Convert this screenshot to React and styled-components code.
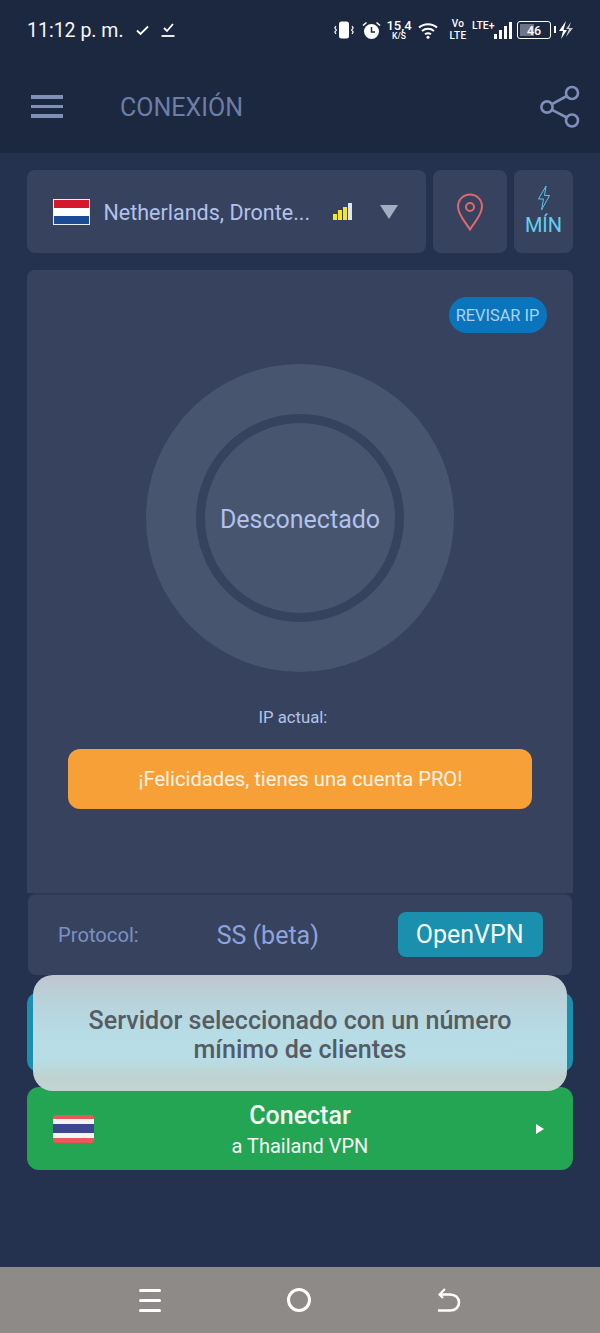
import styled, { createGlobalStyle } from "styled-components";

const GlobalStyle = createGlobalStyle`
  html, body {
    margin: 0;
    padding: 0;
    background: #25324f;
  }
  * {
    box-sizing: border-box;
  }
`;

const App = () => {
  return (
    <Page>
      <GlobalStyle />
      <Top>
        <StatusBar>
          <Clock>11:12 p. m.</Clock>
          <StatusLeftIcons>
            <svg width="15" height="12" viewBox="0 0 15 12" fill="none" stroke="#fff" strokeWidth="1.8">
              <path d="M2 6.5 L5.5 10 L13 2.5" />
            </svg>
            <svg width="14" height="16" viewBox="0 0 14 16" fill="none" stroke="#fff" strokeWidth="1.8">
              <path d="M3 6 L6 9 L12 2" />
              <path d="M0.5 14 H13.5" />
            </svg>
          </StatusLeftIcons>
          <StatusRight>
            <svg width="20" height="18" viewBox="0 0 20 18" fill="#fff">
              <rect x="5" y="0.5" width="10" height="17" rx="2.5" />
              <path d="M2 5 L0.8 7 L2.4 9 L0.8 11 L2 13" fill="none" stroke="#fff" strokeWidth="1.2" />
              <path d="M18 5 L19.2 7 L17.6 9 L19.2 11 L18 13" fill="none" stroke="#fff" strokeWidth="1.2" />
            </svg>
            <AlarmIcon width="19" height="19" viewBox="0 0 19 19">
              <circle cx="9.5" cy="10.5" r="7.5" fill="#fff" />
              <path d="M9.5 6 V11 H13" fill="none" stroke="#1c2840" strokeWidth="1.5" />
              <path d="M1 4.5 L4.5 1.5 M18 4.5 L14.5 1.5" stroke="#fff" strokeWidth="1.6" />
            </AlarmIcon>
            <Speed>
              <SpeedValue>15,4</SpeedValue>
              <SpeedUnit>K/S</SpeedUnit>
            </Speed>
            <WifiIcon width="20" height="17" viewBox="0 0 20 17" fill="none" stroke="#fff" strokeWidth="2">
              <path d="M1 5.5 C6 1 14 1 19 5.5" />
              <path d="M4 9 C7.5 6 12.5 6 16 9" />
              <path d="M7 12.3 C9 10.8 11 10.8 13 12.3" />
              <circle cx="10" cy="15.3" r="1.5" fill="#fff" stroke="none" />
            </WifiIcon>
            <VoLte>
              <span>Vo</span>
              <span>LTE</span>
            </VoLte>
            <LtePlus>LTE+</LtePlus>
            <SignalBars>
              <SignalBar $h={5} />
              <SignalBar $h={9} />
              <SignalBar $h={13} />
              <SignalBar $h={17} />
            </SignalBars>
            <Battery>
              <BatteryFill />
              <BatteryLevel>46</BatteryLevel>
              <BatteryCap />
            </Battery>
            <BoltIcon width="15" height="18" viewBox="0 0 15 18" fill="#fff">
              <path d="M8 0 L1 10 H5 L3 18 L9 9 H5.5 Z" />
              <path d="M13 1 L8 8 H11 L8 16 L15 7 H11 Z" opacity="0.75" />
            </BoltIcon>
          </StatusRight>
        </StatusBar>
        <Toolbar>
          <MenuButton>
            <MenuLine />
            <MenuLine />
            <MenuLine />
          </MenuButton>
          <Title>CONEXIÓN</Title>
          <svg width="40" height="44" viewBox="0 0 40 44" fill="none" stroke="#7f8fb8" strokeWidth="2.6">
            <circle cx="7" cy="22" r="5.6" />
            <circle cx="32" cy="8" r="6" />
            <circle cx="32" cy="35.5" r="6" />
            <path d="M12 19.2 L26.8 11 M12 24.8 L26.8 32.5" />
          </svg>
        </Toolbar>
      </Top>

      <Content>
        <ServerRow>
          <ServerSelect>
            <FlagNl>
              <FlagStripe $color="#d5182c" />
              <FlagStripe $color="#ffffff" />
              <FlagStripe $color="#1c4a94" />
            </FlagNl>
            <ServerName>Netherlands, Dronte...</ServerName>
            <Strength>
              <StrengthBar $h={6} $color="#f6e52a" />
              <StrengthBar $h={10} $color="#f6e52a" />
              <StrengthBar $h={13} $color="#f6e52a" />
              <StrengthBar $h={17} $color="#dfe6ee" />
            </Strength>
            <Caret />
          </ServerSelect>
          <PinButton>
            <svg width="28" height="38" viewBox="0 0 28 38" fill="none" stroke="#e0686c" strokeWidth="2">
              <path d="M14 36.5 C10 30 2 22 2 13.5 C2 6.5 7.5 1.5 14 1.5 C20.5 1.5 26 6.5 26 13.5 C26 22 18 30 14 36.5 Z" />
              <circle cx="14" cy="14" r="4" />
            </svg>
          </PinButton>
          <MinButton>
            <svg width="14" height="26" viewBox="0 0 14 26" fill="none" stroke="#55c6e6" strokeWidth="1">
              <path d="M9 1 L1.5 14 H6.5 L4.5 25 L12.5 10.5 H7.5 Z" />
            </svg>
            <MinLabel>MÍN</MinLabel>
          </MinButton>
        </ServerRow>

        <Panel>
          <CheckIpRow>
            <CheckIp>REVISAR IP</CheckIp>
          </CheckIpRow>
          <OuterCircle>
            <InnerCircle>Desconectado</InnerCircle>
          </OuterCircle>
          <CurrentIp>IP actual:</CurrentIp>
          <ProBanner>¡Felicidades, tienes una cuenta PRO!</ProBanner>
        </Panel>

        <ProtocolRow>
          <ProtocolLabel>Protocol:</ProtocolLabel>
          <ProtocolOption>SS (beta)</ProtocolOption>
          <ProtocolActive>OpenVPN</ProtocolActive>
        </ProtocolRow>

        <Actions>
          <TealButton />
          <ConnectButton>
            <FlagTh>
              <FlagStripe $color="#e8585c" $grow={1} />
              <FlagStripe $color="#f4f4f4" $grow={1} />
              <FlagStripe $color="#3d4790" $grow={2} />
              <FlagStripe $color="#f4f4f4" $grow={1} />
              <FlagStripe $color="#e8585c" $grow={1} />
            </FlagTh>
            <ConnectText>
              <ConnectTitle>Conectar</ConnectTitle>
              <ConnectSub>a Thailand VPN</ConnectSub>
            </ConnectText>
            <Arrow />
          </ConnectButton>
          <Toast>Servidor seleccionado con un número mínimo de clientes</Toast>
        </Actions>
      </Content>

      <NavBar>
        <NavMenu>
          <NavLine />
          <NavLine />
          <NavLine />
        </NavMenu>
        <NavHome />
        <svg width="24" height="26" viewBox="0 0 24 26" fill="none" stroke="#fff" strokeWidth="2.6">
          <path d="M1 23.5 H13 C18.5 23.5 22 20 22 15.5 C22 11 18.5 7.5 13 7.5 H3" />
          <path d="M8 2 L2.5 7.5 L6 11" strokeWidth="2.2" />
        </svg>
      </NavBar>
    </Page>
  );
};

export default App;

const Page = styled.div`
  position: relative;
  width: 600px;
  height: 1333px;
  overflow: hidden;
  display: flex;
  flex-direction: column;
  background: #25324f;
  font-family: Roboto, "Liberation Sans", sans-serif;
`;
const Top = styled.header`
  height: 153px;
  background: #1c2840;
`;
const StatusBar = styled.div`
  height: 60px;
  padding: 0 27px;
  display: flex;
  align-items: center;
`;
const Clock = styled.div`
  color: #f4f6f8;
  font-size: 19.5px;
`;
const StatusLeftIcons = styled.div`
  display: flex;
  align-items: center;
  gap: 11px;
  margin-left: 11px;
`;
const StatusRight = styled.div`
  display: flex;
  align-items: center;
  margin-left: auto;
  color: #fff;
`;
const AlarmIcon = styled.svg`
  margin-left: 8px;
`;
const Speed = styled.div`
  width: 24px;
  margin-left: 6px;
  display: flex;
  flex-direction: column;
  align-items: center;
  line-height: 1;
  font-weight: 500;
`;
const SpeedValue = styled.span`
  font-size: 13px;
`;
const SpeedUnit = styled.span`
  font-size: 8.5px;
`;
const WifiIcon = styled.svg`
  margin-left: 7px;
`;
const VoLte = styled.div`
  width: 18px;
  display: flex;
  flex-direction: column;
  align-items: center;
  margin-left: 11px;
  font-size: 10px;
  line-height: 12px;
  letter-spacing: 0.4px;
  font-weight: 500;
`;
const LtePlus = styled.span`
  width: 24px;
  margin: 0 -2px 8px 5px;
  font-size: 10.5px;
  line-height: 10px;
  font-weight: 500;
  white-space: nowrap;
`;
const SignalBars = styled.div`
  display: flex;
  align-items: flex-end;
  gap: 2px;
  height: 17px;
`;
const SignalBar = styled.i`
  display: block;
  width: 3px;
  height: ${(p) => p.$h}px;
  background: #fff;
`;
const Battery = styled.div`
  position: relative;
  width: 34px;
  height: 18px;
  margin-left: 5px;
  border: 1.5px solid #fff;
  border-radius: 3px;
  display: flex;
  align-items: center;
  justify-content: center;
`;
const BatteryFill = styled.div`
  position: absolute;
  left: 2px;
  top: 2px;
  bottom: 2px;
  width: 14px;
  background: #6d7586;
`;
const BatteryLevel = styled.span`
  position: relative;
  font-size: 12.5px;
  font-weight: 500;
`;
const BatteryCap = styled.div`
  position: absolute;
  right: -6px;
  top: 4px;
  width: 2px;
  height: 7px;
  background: #fff;
`;
const BoltIcon = styled.svg`
  margin-left: 7px;
`;
const Toolbar = styled.div`
  height: 93px;
  padding: 0 20px 0 31px;
  display: flex;
  align-items: center;
`;
const MenuButton = styled.div`
  width: 32px;
  display: flex;
  flex-direction: column;
  gap: 6px;
`;
const MenuLine = styled.div`
  height: 3.5px;
  background: #7f8fb8;
`;
const Title = styled.div`
  margin-left: 57px;
  margin-top: 2px;
  color: #6c7ea5;
  font-size: 25px;
  flex: 1;
`;
const Content = styled.main`
  flex: 1;
  padding: 17px 27px 0;
  display: flex;
  flex-direction: column;
`;
const ServerRow = styled.div`
  height: 83px;
  display: flex;
  gap: 7px;
`;
const Card = styled.div`
  background: #37435e;
  border-radius: 8px;
`;
const ServerSelect = styled(Card)`
  width: 399px;
  padding-left: 26px;
  display: flex;
  align-items: center;
`;
const FlagNl = styled.div`
  width: 37px;
  height: 26px;
  display: flex;
  flex-direction: column;
  border: 1px solid #e8eef4;
`;
const FlagStripe = styled.div`
  flex: ${(p) => p.$grow || 1};
  background: ${(p) => p.$color};
`;
const ServerName = styled.div`
  margin: 2px 1px 0 13.5px;
  width: 228.5px;
  color: #b1c2ea;
  font-size: 21.5px;
  white-space: nowrap;
`;
const Strength = styled.div`
  display: flex;
  align-items: flex-end;
  gap: 1px;
  height: 17px;
`;
const StrengthBar = styled.i`
  display: block;
  width: 4px;
  height: ${(p) => p.$h}px;
  background: ${(p) => p.$color};
`;
const Caret = styled.div`
  margin-left: 28px;
  width: 0;
  height: 0;
  border-left: 9px solid transparent;
  border-right: 9px solid transparent;
  border-top: 14px solid #a2adc2;
`;
const PinButton = styled(Card)`
  width: 74px;
  display: flex;
  align-items: center;
  justify-content: center;
`;
const MinButton = styled(Card)`
  flex: 1;
  display: flex;
  flex-direction: column;
  align-items: center;
  padding-top: 15px;
`;
const MinLabel = styled.div`
  color: #5fd0ee;
  font-size: 20px;
  line-height: 24px;
  margin-top: 2px;
`;
const Panel = styled(Card)`
  margin-top: 17px;
  height: 623px;
  padding-top: 27px;
  border-radius: 8px 8px 0 0;
  display: flex;
  flex-direction: column;
  align-items: center;
`;
const CheckIpRow = styled.div`
  align-self: stretch;
  display: flex;
  justify-content: flex-end;
  padding-right: 26px;
`;
const CheckIp = styled.div`
  height: 36px;
  width: 98px;
  padding-right: 1px;
  border-radius: 18px;
  background: #0a75bd;
  color: #a9d2ee;
  font-size: 16.4px;
  display: flex;
  align-items: center;
  justify-content: center;
`;
const OuterCircle = styled.div`
  margin-top: 31px;
  width: 308px;
  height: 308px;
  border-radius: 50%;
  background: #47556f;
  display: flex;
  align-items: center;
  justify-content: center;
`;
const InnerCircle = styled.div`
  width: 208px;
  height: 208px;
  padding-top: 2px;
  border-radius: 50%;
  border: 9px solid #37435e;
  display: flex;
  align-items: center;
  justify-content: center;
  color: #b1c2ea;
  font-size: 25px;
  white-space: nowrap;
`;
const CurrentIp = styled.div`
  margin-top: 36px;
  margin-right: 14px;
  color: #b1c2ea;
  font-size: 16.7px;
  line-height: 20px;
`;
const ProBanner = styled.div`
  margin-top: 21px;
  width: 464px;
  height: 60px;
  padding-left: 1px;
  border-radius: 12px;
  background: #f7a037;
  color: #fdf3e4;
  font-size: 20.2px;
  display: flex;
  align-items: center;
  justify-content: center;
`;
const ProtocolRow = styled(Card)`
  margin: 0 1px;
  height: 82px;
  padding: 0 29px 0 30px;
  border-top: 2px solid #2d3955;
  display: flex;
  align-items: center;
`;
const ProtocolLabel = styled.div`
  width: 159px;
  color: #7d8fc6;
  font-size: 20.2px;
`;
const ProtocolOption = styled.div`
  width: 182px;
  color: #8da3dc;
  font-size: 25px;
`;
const ProtocolActive = styled.div`
  width: 145px;
  height: 45px;
  margin-top: -1px;
  padding-right: 2px;
  border-radius: 8px;
  background: #1a8fae;
  color: #f2f8fb;
  font-size: 25px;
  display: flex;
  align-items: center;
  justify-content: center;
`;
const Actions = styled.div`
  position: relative;
  margin-top: 17px;
  display: flex;
  flex-direction: column;
  gap: 15px;
`;
const TealButton = styled.div`
  height: 80px;
  border-radius: 12px;
  background: #1a8fae;
`;
const ConnectButton = styled.div`
  height: 83px;
  padding: 0 29px 0 26px;
  border-radius: 12px;
  background: #24a553;
  display: flex;
  align-items: center;
`;
const FlagTh = styled.div`
  width: 41px;
  height: 28px;
  border-radius: 3px;
  overflow: hidden;
  display: flex;
  flex-direction: column;
`;
const ConnectText = styled.div`
  flex: 1;
  padding-top: 4px;
  display: flex;
  flex-direction: column;
  align-items: center;
  color: #f2f8f4;
  margin-right: 30px;
`;
const ConnectTitle = styled.div`
  font-size: 25px;
  font-weight: 500;
  line-height: 30px;
`;
const ConnectSub = styled.div`
  font-size: 20px;
  line-height: 30px;
`;
const Arrow = styled.div`
  width: 0;
  height: 0;
  border-top: 5px solid transparent;
  border-bottom: 5px solid transparent;
  border-left: 8px solid #fff;
`;
const Toast = styled.div`
  position: absolute;
  left: 6px;
  top: -17px;
  width: 534px;
  height: 116px;
  padding: 4px 39px 0;
  border-radius: 20px;
  background: linear-gradient(
    180deg,
    #bfc6cf 0%,
    #b9d2da 22%,
    #b6dce6 50%,
    #b8dde6 72%,
    #bfd2d0 88%,
    #c4d5d0 100%
  );
  color: #555c63;
  font-size: 25.1px;
  line-height: 29px;
  font-weight: 500;
  text-align: center;
  display: flex;
  align-items: center;
  justify-content: center;
`;
const NavBar = styled.nav`
  height: 66px;
  background: #8e8a88;
  padding: 0 139px;
  display: flex;
  align-items: center;
  justify-content: space-between;
`;
const NavMenu = styled.div`
  width: 22px;
  display: flex;
  flex-direction: column;
  gap: 7px;
`;
const NavLine = styled.div`
  height: 3px;
  border-radius: 2px;
  background: #fff;
`;
const NavHome = styled.div`
  width: 24px;
  height: 24px;
  border-radius: 50%;
  border: 3px solid #fff;
`;
